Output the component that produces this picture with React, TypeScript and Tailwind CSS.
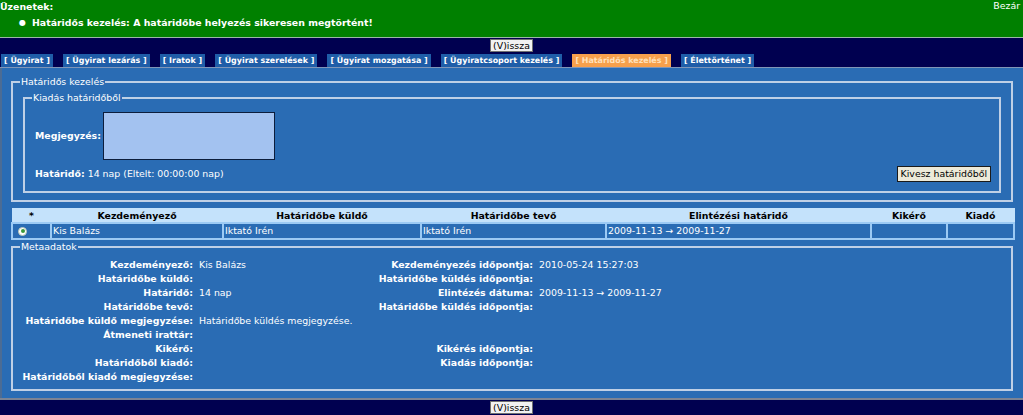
import React from "react";

const tabs = [
  "Ügyirat",
  "Ügyirat lezárás",
  "Iratok",
  "Ügyirat szerelések",
  "Ügyirat mozgatása",
  "Ügyiratcsoport kezelés",
  "Határidős kezelés",
  "Élettörténet",
];

const meta: [string, string, string, string][] = [
  ["Kezdeményező:", "Kis Balázs", "Kezdeményezés időpontja:", "2010-05-24 15:27:03"],
  ["Határidőbe küldő:", "", "Határidőbe küldés időpontja:", ""],
  ["Határidő:", "14 nap", "Elintézés dátuma:", "2009-11-13 → 2009-11-27"],
  ["Határidőbe tevő:", "", "Határidőbe küldés időpontja:", ""],
  ["Határidőbe küldő megjegyzése:", "Határidőbe küldés megjegyzése.", "", ""],
  ["Átmeneti irattár:", "", "", ""],
  ["Kikérő:", "", "Kikérés időpontja:", ""],
  ["Határidőből kiadó:", "", "Kiadás időpontja:", ""],
  ["Határidőből kiadó megjegyzése:", "", "", ""],
];

function BackButton() {
  return (
    <div className="flex justify-center">
      <div className="h-[13px] px-[2px] bg-[#f2f2f2] border border-[#707070] text-black text-[9.4px] leading-[11px] font-['DejaVu_Sans',sans-serif]">
        (V)issza
      </div>
    </div>
  );
}

export default function App() {
  return (
    <div className="w-[1023px] h-[415px] overflow-hidden bg-[#000050] font-['DejaVu_Sans',sans-serif] text-[9.4px] text-white">
      {/* Messages */}
      <div className="h-[37px] bg-[#008000] relative">
        <div className="font-bold leading-[12px] pt-[1px]">Üzenetek:</div>
        <div className="absolute right-[3px] top-[0px] leading-[12px]">Bezár</div>
        <div className="flex items-center mt-[4px] leading-[12px] font-bold">
          <span className="w-[32px] pl-[19px] text-[8px]">●</span>
          <span>Határidős kezelés: A határidőbe helyezés sikeresen megtörtént!</span>
        </div>
      </div>
      <div className="h-[1px] bg-[#9bb8a8]" />

      {/* Nav strip */}
      <div className="pt-[1px] h-[29px]">
        <BackButton />
        <div className="flex gap-[10px] pl-[1px] mt-[2px]">
          {tabs.map((t, i) => (
            <div
              key={t}
              className={
                "h-[13px] px-[3px] leading-[13px] font-bold text-[7.95px] whitespace-nowrap " +
                (i === 6 ? "bg-[#f7a04c] text-[#ffe2bc]" : "bg-[#1f5da8] text-white")
              }
            >
              [ {t} ]
            </div>
          ))}
        </div>
      </div>
      <div className="h-[1px] bg-[#8096b8]" />

      {/* Main */}
      <div className="h-[330px] bg-[#2a6cb4] border-l-2 border-[#4c6c94] pl-[9px] pr-[10px] pt-[8px]">
        <fieldset className="border-2 border-[#bfd0e6] px-[10px] pb-[7px]">
          <legend className="leading-[12px] px-[1px] ml-[-3px]">Határidős kezelés</legend>
          <fieldset className="border-2 border-[#bfd0e6] pl-[10px] pr-[8px] pb-[9px] mt-[4px]">
            <legend className="leading-[12px] px-[1px] ml-[-3px]">Kiadás határidőből</legend>
            <div className="flex items-center mt-[8px]">
              <span className="font-bold w-[68px]">Megjegyzés:</span>
              <div className="w-[172px] h-[48px] bg-[#a3c2f0] border border-[#0c1d3c]" />
            </div>
            <div className="flex items-end justify-between mt-[6px]">
              <div className="leading-[12px] mb-[2px]">
                <span className="font-bold">Határidő:</span> 14 nap (Eltelt: 00:00:00 nap)
              </div>
              <div className="h-[16px] px-[3px] bg-[#ece9d8] border border-[#1a1a1a] text-black leading-[14px] whitespace-nowrap">
                Kivesz határidőből
              </div>
            </div>
          </fieldset>
        </fieldset>

        {/* Table */}
        <table className="mt-[6px] w-[1002px] table-fixed border-collapse">
          <colgroup>
            <col className="w-[39px]" />
            <col className="w-[172px]" />
            <col className="w-[198px]" />
            <col className="w-[185px]" />
            <col className="w-[265px]" />
            <col className="w-[76px]" />
            <col className="w-[67px]" />
          </colgroup>
          <thead>
            <tr className="h-[14px] bg-[#c4e2fb] text-black font-bold">
              <th className="leading-[13px] font-bold border border-[#c4e2fb]">*</th>
              <th className="leading-[13px] font-bold border border-[#c4e2fb]">Kezdeményező</th>
              <th className="leading-[13px] font-bold border border-[#c4e2fb]">Határidőbe küldő</th>
              <th className="leading-[13px] font-bold border border-[#c4e2fb]">Határidőbe tevő</th>
              <th className="leading-[13px] font-bold border border-[#c4e2fb]">Elintézési határidő</th>
              <th className="leading-[13px] font-bold border border-[#c4e2fb]">Kikérő</th>
              <th className="leading-[13px] font-bold border border-[#c4e2fb]">Kiadó</th>
            </tr>
          </thead>
          <tbody>
            <tr className="h-[16px] bg-[#2a6cb4]">
              <td className="border-2 border-[#9ccaf4] pl-[5px]">
                <span className="flex items-center justify-center w-[9px] h-[9px] rounded-full bg-white border border-[#b8c8b8]">
                  <span className="w-[4px] h-[4px] rounded-full bg-[#3a9a3a]" />
                </span>
              </td>
              <td className="border-2 border-[#9ccaf4] px-[1px] leading-[12px] whitespace-nowrap">Kis Balázs</td>
              <td className="border-2 border-[#9ccaf4] px-[1px] leading-[12px] whitespace-nowrap">Iktató Irén</td>
              <td className="border-2 border-[#9ccaf4] px-[1px] leading-[12px] whitespace-nowrap">Iktató Irén</td>
              <td className="border-2 border-[#9ccaf4] px-[1px] leading-[12px] whitespace-nowrap">2009-11-13 → 2009-11-27</td>
              <td className="border-2 border-[#9ccaf4]"></td>
              <td className="border-2 border-[#9ccaf4]"></td>
            </tr>
          </tbody>
        </table>

        {/* Metadata */}
        <fieldset className="mt-[1px] w-[1002px] border-2 border-[#bfd0e6] pb-[5px]">
          <legend className="leading-[12px] px-[1px] ml-[7px]">Metaadatok</legend>
          <div className="grid grid-cols-[180px_150px_178px_1fr] gap-x-[6px] mt-[5px]">
            {meta.map((r, i) => (
              <React.Fragment key={i}>
                <div className="h-[14px] leading-[14px] text-right font-bold whitespace-nowrap">{r[0]}</div>
                <div className="h-[14px] leading-[14px] whitespace-nowrap">{r[1]}</div>
                <div className="h-[14px] leading-[14px] text-right font-bold whitespace-nowrap">{r[2]}</div>
                <div className="h-[14px] leading-[14px] whitespace-nowrap">{r[3]}</div>
              </React.Fragment>
            ))}
          </div>
        </fieldset>
      </div>
      <div className="h-[2px] bg-[#7c8494]" />
      <div className="pt-[1px]">
        <BackButton />
      </div>
    </div>
  );
}
